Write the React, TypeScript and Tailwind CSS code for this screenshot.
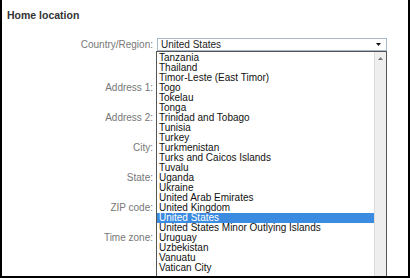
import React from "react";

const countries = [
  "Tanzania",
  "Thailand",
  "Timor-Leste (East Timor)",
  "Togo",
  "Tokelau",
  "Tonga",
  "Trinidad and Tobago",
  "Tunisia",
  "Turkey",
  "Turkmenistan",
  "Turks and Caicos Islands",
  "Tuvalu",
  "Uganda",
  "Ukraine",
  "United Arab Emirates",
  "United Kingdom",
  "United States",
  "United States Minor Outlying Islands",
  "Uruguay",
  "Uzbekistan",
  "Vanuatu",
  "Vatican City",
];

const labels = ["Address 1:", "Address 2:", "City:", "State:", "ZIP code:", "Time zone:"];

function CountrySelect() {
  return (
    <div className="relative">
      <div className="flex h-[13px] w-[230px] items-center justify-between border border-[#a9b8c8] bg-white pl-[3px] pr-[5px] text-[10px] leading-none text-[#222]">
        <span>United States</span>
        <svg width="5" height="3" viewBox="0 0 5 3">
          <path d="M0 0h5L2.5 3z" fill="#111" />
        </svg>
      </div>
      <div className="absolute left-[-1px] top-[13px] z-10 flex h-[240px] w-[231px] border border-[#555] bg-white">
        <ul className="flex-1 pt-[1px]">
          {countries.map((c) => (
            <li
              key={c}
              className={
                c === "United States"
                  ? "h-[10px] bg-[#3b8be0] pl-[2px] text-[10px] leading-[10px] text-white"
                  : "h-[10px] pl-[2px] text-[10px] leading-[10px] text-[#111]"
              }
            >
              {c}
            </li>
          ))}
        </ul>
        <div className="flex w-[12px] justify-center border-l border-[#dcdcdc] bg-[#eeeeee] pt-[5px]">
          <svg width="5" height="3" viewBox="0 0 5 3">
            <path d="M0 3h5L2.5 0z" fill="#777" />
          </svg>
        </div>
      </div>
    </div>
  );
}

export default function App() {
  return (
    <div
      className="relative h-[278px] w-[410px] overflow-hidden border-b-2 border-l-2 border-r-2 border-black bg-white"
      style={{ fontFamily: '"Liberation Sans", Arial, sans-serif' }}
    >
      <div className="pl-[5px] pt-[9px] text-[10.5px] font-bold leading-[12px] text-[#333]">
        Home location
      </div>
      <div className="mt-[17px] flex items-center">
        <div className="w-[155px] pr-[4px] text-right text-[10px] leading-none text-[#777]">
          Country/Region:
        </div>
        <CountrySelect />
      </div>
      <div className="mt-[32px] flex flex-col">
        {labels.map((l) => (
          <div
            key={l}
            className="h-[30px] w-[155px] pr-[4px] text-right text-[10px] leading-[10px] text-[#777]"
          >
            {l}
          </div>
        ))}
      </div>
    </div>
  );
}
